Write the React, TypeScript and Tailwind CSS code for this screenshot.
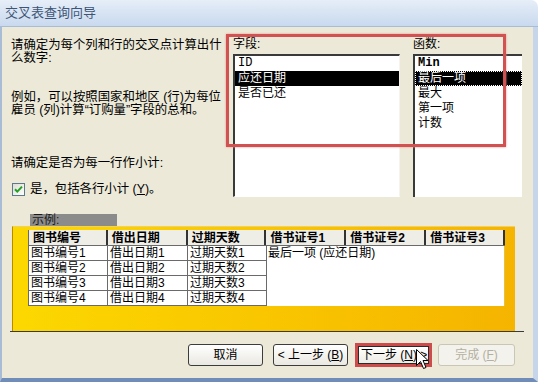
import React from "react";

const headers = ["图书编号", "借出日期", "过期天数", "借书证号1", "借书证号2", "借书证号3"];
const colW = ["w-[79px]", "w-[80px]", "w-[79px]", "w-[80px]", "w-[80px]", "w-[79px]"];
const rows = [1, 2, 3, 4];

const Cursor = () => (
  <svg width="13" height="21" viewBox="0 0 13 21" className="absolute left-[416px] top-[349px]">
    <path d="M0.5 0.5 L0.5 16.5 L4.5 12.5 L7.5 19.5 L10 18.5 L7 11.5 L12 11.5 Z" fill="#fff" stroke="#000" strokeWidth="1" />
  </svg>
);

const Checkbox = () => (
  <svg width="13" height="13" viewBox="0 0 13 13">
    <defs>
      <linearGradient id="cb" x1="0" y1="0" x2="1" y2="1">
        <stop offset="0" stopColor="#dcdcd4" />
        <stop offset="1" stopColor="#ffffff" />
      </linearGradient>
    </defs>
    <rect x="0.5" y="0.5" width="12" height="12" fill="url(#cb)" stroke="#5c7a8c" />
    <path d="M3 6.2 L5.3 8.6 L10 3.6" fill="none" stroke="#21a121" strokeWidth="2" />
  </svg>
);

export default function App() {
  return (
    <div className="relative w-[538px] h-[382px] overflow-hidden bg-white font-['Liberation_Sans','Noto_Sans_CJK_SC',sans-serif] text-black flex flex-col">
      {/* 标题栏 */}
      <div className="h-[27px] rounded-tr-[7px] bg-gradient-to-b from-[#e6eef8] to-[#c9d9ee] border-b border-[#a8bcd6] pl-[5px] text-[13px] leading-[26px] text-[#3e5576]">
        交叉表查询向导
      </div>

      <div className="flex-1 bg-[#ece9d8] border-l-2 border-r-[5px] border-b-4 border-l-[#a9bcd6] border-r-[#c6d5ea] border-b-[#6f8db8] flex flex-col">
        {/* 上半部分 */}
        <div className="flex h-[187px]">
          <div className="w-[231px] pl-[9px] pt-[12px] text-[12.4px] leading-[13px] whitespace-nowrap">
            <p>
              请确定为每个列和行的交叉点计算出什
              <br />
              么数字:
            </p>
            <p className="mt-[26px]">
              例如，可以按照国家和地区 (行)为每位
              <br />
              雇员 (列)计算“订购量”字段的总和。
            </p>
            <p className="mt-[40px]">请确定是否为每一行作小计:</p>
            <div className="mt-[12px] flex items-center gap-[5px] h-[14px] pl-[1px]">
              <Checkbox />
              <span>
                是，包括各行小计 (<span className="underline">Y</span>)。
              </span>
            </div>
          </div>

          <div className="w-[167px] pt-[10px] text-[12px]">
            <div className="leading-[14px]">字段:</div>
            <div className="mt-[3px] h-[143px] bg-white border-t-2 border-l-2 border-t-[#3a3a3a] border-l-[#3a3a3a] border-b border-r border-b-white border-r-[#f4f3ee] leading-[15px]">
              <div className="pl-[3px] h-[15px] font-['Liberation_Mono','Noto_Sans_CJK_SC',monospace]">ID</div>
              <div className="pl-[3px] h-[15px] bg-black text-white">应还日期</div>
              <div className="pl-[3px] h-[15px]">是否已还</div>
            </div>
          </div>

          <div className="ml-[13px] w-[109px] pt-[10px] text-[12px]">
            <div className="leading-[14px]">函数:</div>
            <div className="mt-[3px] h-[143px] bg-white border-t-2 border-l-2 border-t-[#3a3a3a] border-l-[#3a3a3a] leading-[15px]">
              <div className="pl-[3px] h-[15px] font-['Liberation_Mono','Noto_Sans_CJK_SC',monospace] font-bold">Min</div>
              <div className="pl-[2px] h-[15px] bg-black text-white border border-dotted border-white leading-[13px]">最后一项</div>
              <div className="pl-[3px] h-[15px]">最大</div>
              <div className="pl-[3px] h-[15px]">第一项</div>
              <div className="pl-[3px] h-[15px]">计数</div>
            </div>
          </div>
        </div>

        {/* 示例 */}
        <div className="ml-[28px] w-[87px] h-[12px] bg-[#8b8b8b] pl-[2px] text-[12px] leading-[12px] text-[#1a1a1a]">示例:</div>
        <div className="ml-[10px] w-[503px] h-[105px] bg-gradient-to-r from-[#fcd800] via-[#f9c600] to-[#f5b400] border-l border-t border-l-[#b88a00] border-t-[#f0d060] pl-[15px] pt-[3px]">
          <div className="w-[477px] text-[12px] border-l border-[#6a6a6a]">
            <div className="flex h-[16px] bg-[#eeede6] border-b border-[#6a6a6a]">
              {headers.map((h, i) => (
                <div key={h} className={`${colW[i]} border-r-2 border-[#333] pl-[4px] font-bold leading-[16px] whitespace-nowrap`}>
                  {h}
                </div>
              ))}
            </div>
            <div className="flex">
              <div className="flex">
                {["图书编号", "借出日期", "过期天数"].map((c, i) => (
                  <div key={c} className={colW[i]}>
                    {rows.map((r) => (
                      <div key={r} className="h-[15px] bg-white border-r border-b border-[#6a6a6a] pl-[2px] leading-[14px] whitespace-nowrap">
                        {c}
                        {r}
                      </div>
                    ))}
                  </div>
                ))}
              </div>
              <div className="w-[239px] h-[60px] bg-white pl-[1px] leading-[14px] border-r border-[#e8c040]">最后一项 (应还日期)</div>
            </div>
          </div>
        </div>
        <div className="ml-[8px] w-[514px] h-px bg-[#3a3a3a]" />

        {/* 按钮 */}
        <div className="flex ml-[186px] mt-[11px] text-[12px] items-center">
          <button className="w-[75px] h-[22px] rounded-[3px] border border-[#3c3c3c] bg-gradient-to-b from-white to-[#e9e8e1] flex items-center justify-center">
            取消
          </button>
          <button className="ml-[10px] w-[75px] h-[22px] rounded-[3px] border border-[#3c3c3c] bg-gradient-to-b from-white to-[#e9e8e1] flex items-center justify-center whitespace-nowrap">
            &lt; 上一步 (<span className="underline">B</span>)
          </button>
          <div className="ml-[7px] w-[77px] h-[24px] border-[3px] border-[#cd4b4b]">
            <button className="w-full h-full border border-[#2a2a2a] bg-gradient-to-b from-white to-[#ecebe4] flex items-center pl-[2px] whitespace-nowrap leading-[16px]">
              下一步 (<span className="underline">N</span>) &gt;
            </button>
          </div>
          <button className="ml-[6px] w-[77px] h-[22px] rounded-[3px] border border-[#c9c6b6] bg-[#f3f2ec] text-[#b3b0a1] flex items-center justify-center whitespace-nowrap">
            完成 (<span className="underline">F</span>)
          </button>
        </div>
      </div>

      {/* 红色标注框 */}
      <div className="absolute left-[226px] top-[34px] w-[280px] h-[113px] border-[3px] border-[#d25252] shadow-[0_0_2px_#e89090]" />
      <Cursor />
    </div>
  );
}
